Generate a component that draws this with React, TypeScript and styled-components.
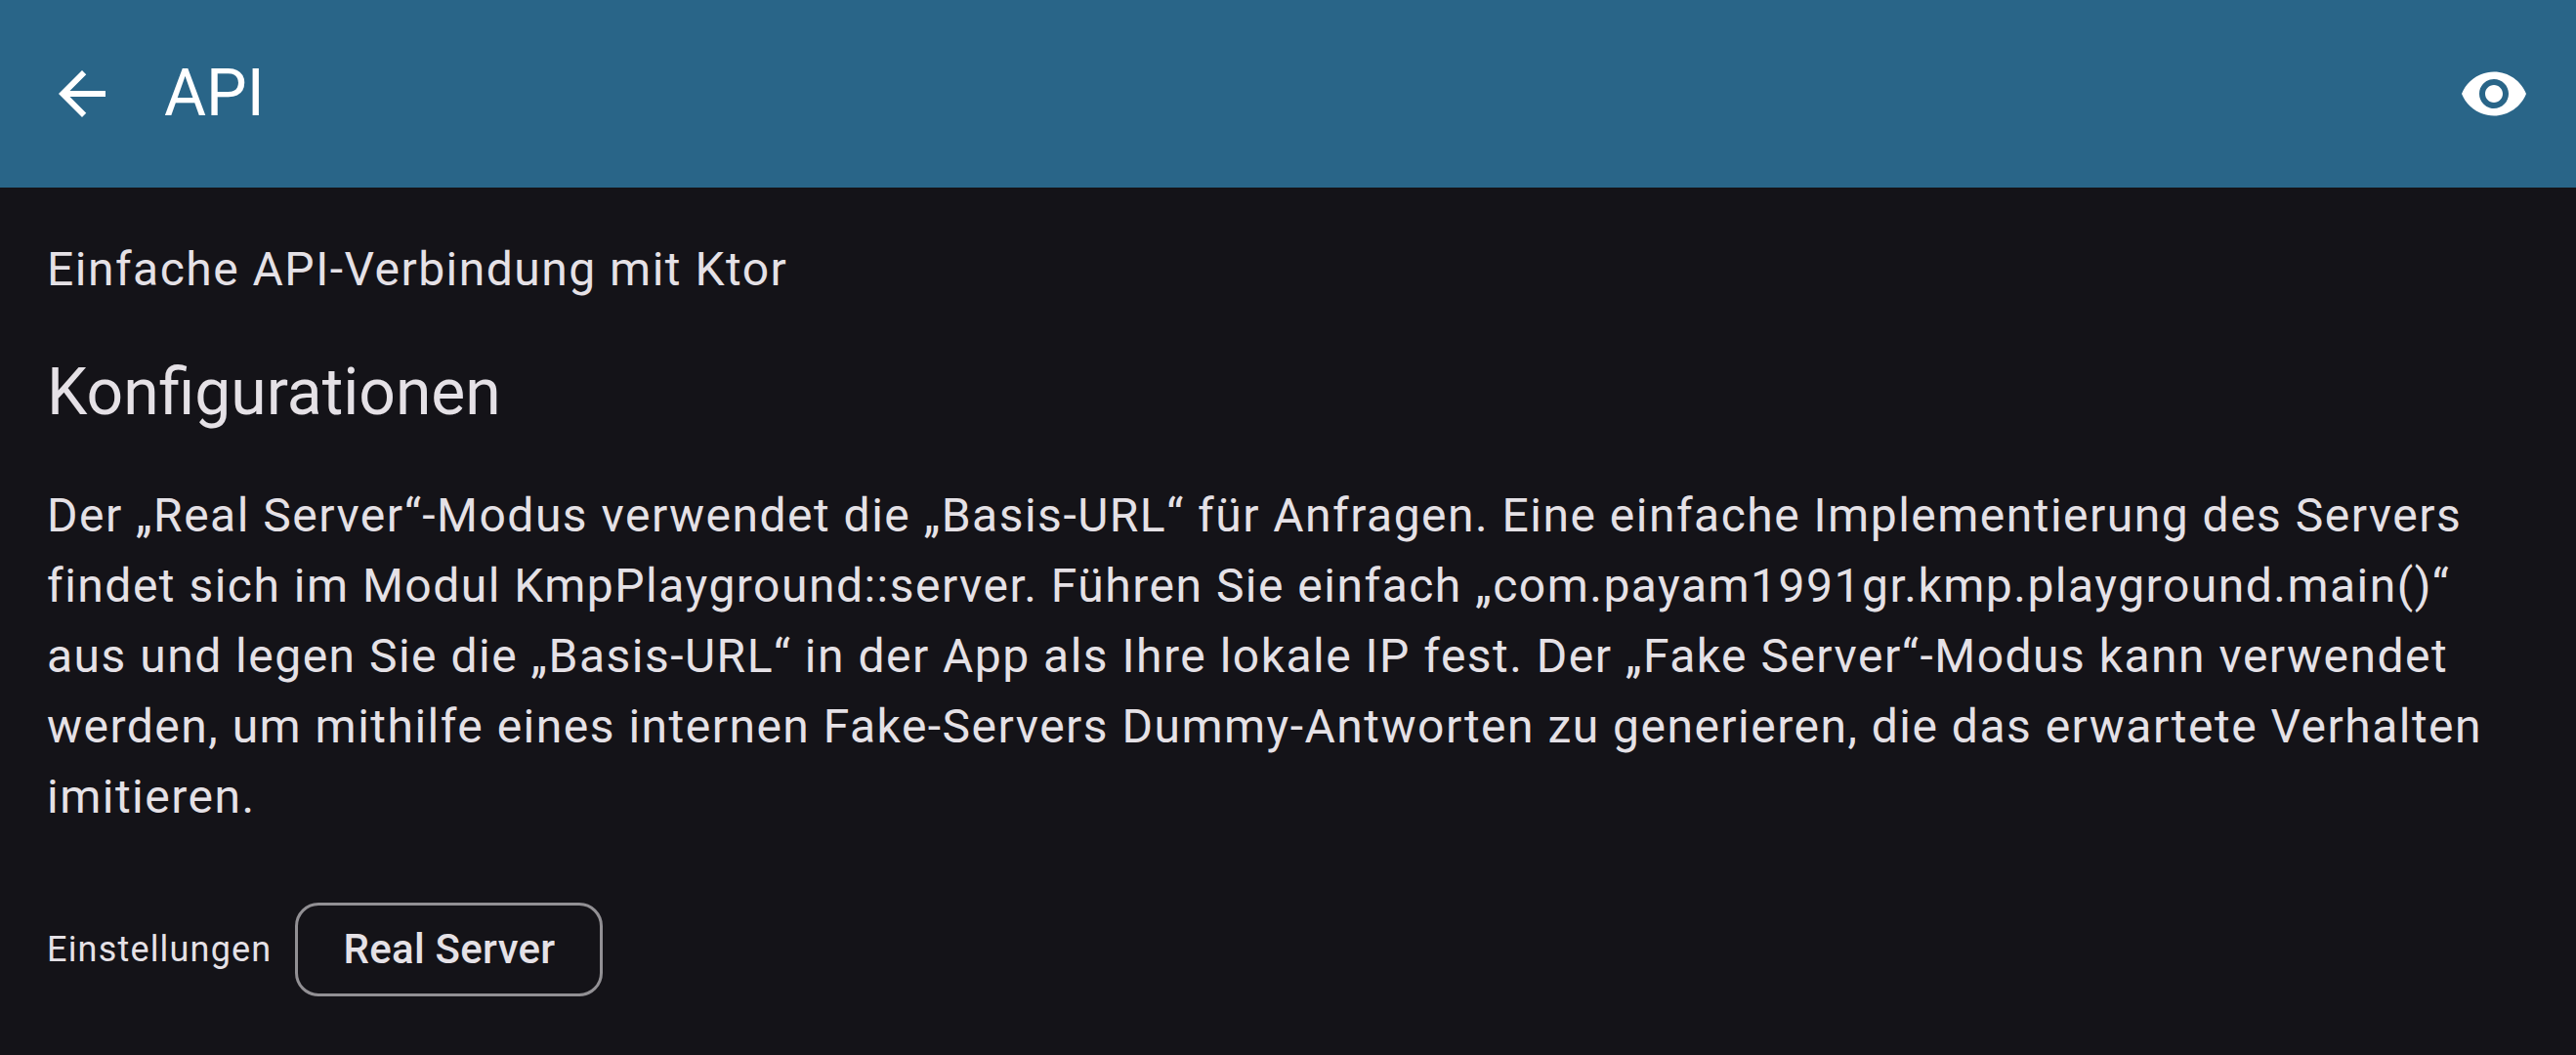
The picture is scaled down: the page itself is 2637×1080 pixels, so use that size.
import React from "react";
import styled, { createGlobalStyle } from "styled-components";

const GlobalStyle = createGlobalStyle`
  body {
    margin: 0;
    background: #141318;
    color: #e5e1e6;
    font-family: Roboto, sans-serif;
  }
`;

const Screen = styled.div`
  min-height: 100vh;
`;

const TopBar = styled.header`
  display: flex;
  align-items: center;
  gap: 48px;
  height: 192px;
  padding: 0 48px;
  box-sizing: border-box;
  background: #296588;
  color: #ffffff;
`;

const IconButton = styled.button`
  display: flex;
  padding: 0;
  border: 0;
  background: none;
  color: inherit;
  cursor: pointer;

  svg {
    width: 72px;
    height: 72px;
    fill: currentColor;
  }
`;

const Title = styled.h1`
  flex: 1;
  margin: 0;
  font-size: 66px;
  line-height: 84px;
  font-weight: 400;
`;

const Content = styled.main`
  display: flex;
  flex-direction: column;
  gap: 48px;
  padding: 48px;
`;

const Body = styled.p`
  margin: 0;
  font-size: 48px;
  line-height: 72px;
  letter-spacing: 0.031em;
`;

const SectionTitle = styled.h2`
  margin: 0;
  font-size: 66px;
  line-height: 84px;
  font-weight: 400;
`;

const SettingRow = styled.div`
  display: flex;
  align-items: center;
  gap: 24px;
  padding-top: 24px;
`;

const SettingLabel = styled.label`
  font-size: 36px;
  line-height: 48px;
  letter-spacing: 0.033em;
`;

const Chip = styled.button`
  height: 96px;
  padding: 0 46px;
  border: 3px solid #929094;
  border-radius: 24px;
  background: none;
  color: inherit;
  font: 500 42px/60px Roboto, sans-serif;
  letter-spacing: 0.007em;
  cursor: pointer;
`;

export default function App() {
  return (
    <Screen lang="de">
      <GlobalStyle />
      <TopBar>
        <IconButton type="button" aria-label="Zurück">
          <svg viewBox="0 0 24 24" aria-hidden="true">
            <path d="M20 11H7.83l5.59-5.59L12 4l-8 8 8 8 1.41-1.41L7.83 13H20v-2z" />
          </svg>
        </IconButton>
        <Title>API</Title>
        <IconButton type="button" aria-label="Anzeigen">
          <svg viewBox="0 0 24 24" aria-hidden="true">
            <path d="M12 4.5C7 4.5 2.73 7.61 1 12c1.73 4.39 6 7.5 11 7.5s9.27-3.11 11-7.5c-1.73-4.39-6-7.5-11-7.5zM12 17c-2.76 0-5-2.24-5-5s2.24-5 5-5 5 2.24 5 5-2.24 5-5 5zm0-8c-1.66 0-3 1.34-3 3s1.34 3 3 3 3-1.34 3-3-1.34-3-3-3z" />
          </svg>
        </IconButton>
      </TopBar>
      <Content>
        <Body>Einfache API-Verbindung mit Ktor</Body>
        <SectionTitle>Konfigurationen</SectionTitle>
        <Body>
          Der „Real Server“-Modus verwendet die „Basis-URL“ für Anfragen. Eine einfache
          Implementierung des Servers findet sich im Modul KmpPlayground::server. Führen Sie
          einfach „com.payam1991gr.kmp.playground.main()“ aus und legen Sie die „Basis-URL“ in
          der App als Ihre lokale IP fest. Der „Fake Server“-Modus kann verwendet werden, um
          mithilfe eines internen Fake-Servers Dummy-Antworten zu generieren, die das erwartete
          Verhalten imitieren.
        </Body>
        <SettingRow>
          <SettingLabel htmlFor="server-mode">Einstellungen</SettingLabel>
          <Chip id="server-mode" type="button">Real Server</Chip>
        </SettingRow>
      </Content>
    </Screen>
  );
}
